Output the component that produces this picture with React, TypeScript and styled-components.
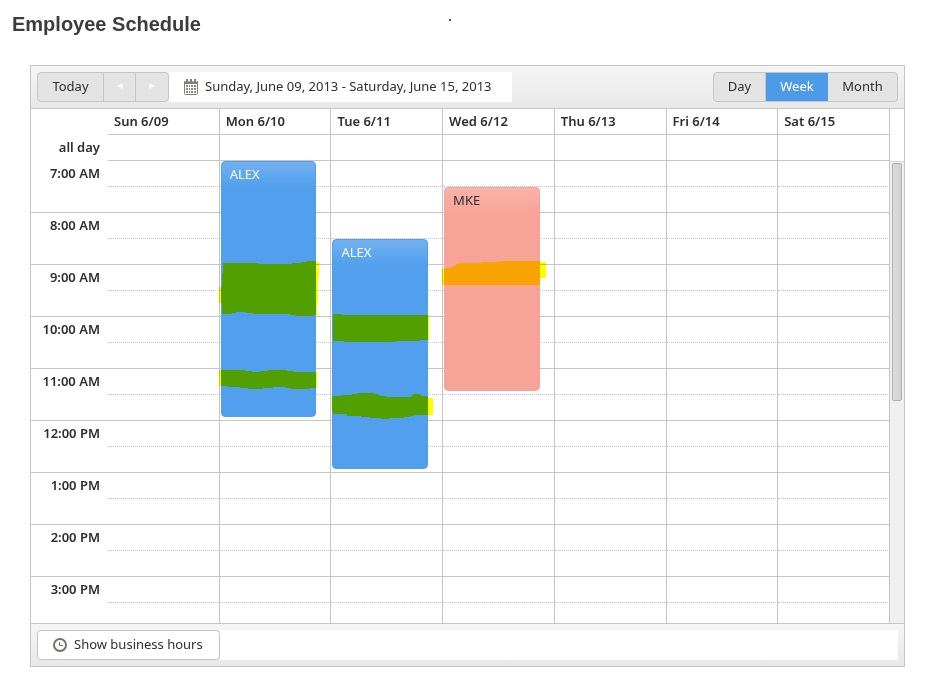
import React from "react";
import styled, { createGlobalStyle } from "styled-components";

const LINE = "#c5c5c5";

const GlobalStyle = createGlobalStyle`
  * { box-sizing: border-box; }
  body {
    margin: 0;
    background: #fff;
    color: #2e2e2e;
    font: 13px/20px "Noto Sans", "Open Sans", sans-serif;
  }
  button { font: inherit; color: inherit; }
`;

const Page = styled.main`
  padding: 12px 20px 16px 12px;
`;

const PageHeader = styled.header`
  display: grid;
  grid-template-columns: 1fr 1fr;
  align-items: start;
  margin-bottom: 29px;
`;

const Title = styled.h1`
  margin: 0;
  font: bold 20px/24px "Liberation Sans", Arial, sans-serif;
  color: #3c3c3c;
`;

const InkDot = styled.span`
  width: 2px;
  height: 2px;
  margin: 7px 0 0 -10px;
  background: #3f48cc;
`;

const Scheduler = styled.section`
  margin-left: 18px;
  border: 1px solid ${LINE};
`;

const Bar = styled.div<{ $footer?: boolean }>`
  display: flex;
  align-items: center;
  padding: 6px;
  background: linear-gradient(#f5f5f5, #e8e8e8);
  border: 0 solid ${LINE};
  border-width: ${(p) => (p.$footer ? "1px 0 0" : "0 0 1px")};
`;

const ButtonGroup = styled.div`
  display: flex;
  height: 30px;
  border: 1px solid ${LINE};
  border-radius: 4px;
  overflow: hidden;
  background: #e3e3e3;
`;

const GroupButton = styled.button<{ $width: number; $active?: boolean }>`
  display: flex;
  align-items: center;
  justify-content: center;
  width: ${(p) => p.$width}px;
  padding: 0 0 2px;
  border: 0;
  background: ${(p) => (p.$active ? "#4d9be8" : "transparent")};
  color: ${(p) => (p.$active ? "#fff" : "#2e2e2e")};
  & + & {
    border-left: ${(p) => (p.$active ? "0" : `1px solid ${LINE}`)};
  }
  &[aria-pressed="true"] + & {
    border-left: 0;
  }
`;

const DateRange = styled.a`
  display: flex;
  align-items: center;
  gap: 6px;
  min-width: 343px;
  height: 30px;
  padding: 0 14px;
  background: #fff;
  color: inherit;
  text-decoration: none;
  white-space: nowrap;
`;

const Label = styled.span`
  padding-bottom: 2px;
`;

const Spacer = styled.div`
  flex: 1;
`;

const FooterStrip = styled.div`
  flex: 1;
  height: 30px;
  background: #fff;
`;

const HoursButton = styled.button`
  display: flex;
  align-items: center;
  gap: 7px;
  min-width: 183px;
  height: 30px;
  padding: 0 15px;
  border: 1px solid ${LINE};
  border-radius: 4px;
  background: #fff;
`;

const GridRow = styled.div`
  display: flex;
`;

const ScrollArea = styled.div`
  flex: 1;
  height: 462px;
  overflow: hidden;
`;

const HeaderArea = styled.div`
  flex: 1;
`;

const HeaderGutter = styled.div`
  width: 14px;
`;

const Track = styled.div`
  width: 14px;
  padding: 1px 2px 0;
  background: #f0f0f0;
  border-top: 1px solid #dadada;
`;

const Thumb = styled.div`
  width: 10px;
  height: 238px;
  border: 1px solid #b0b0b0;
  border-radius: 2px;
  background: linear-gradient(90deg, #dcdcdc, #d2d2d2);
`;

const Table = styled.table`
  width: 100%;
  table-layout: fixed;
  border-collapse: separate;
  border-spacing: 0;
`;

const LabelCol = styled.col`
  width: 77px;
`;

const DayHead = styled.th`
  height: 26px;
  padding: 0 6px 2px;
  border: solid ${LINE};
  border-width: 0 1px 1px 0;
  text-align: left;
  font-weight: 600;
  white-space: nowrap;
`;

const TimeHead = styled.th<{ $line?: boolean }>`
  padding: 2px 8px 0 0;
  border-bottom: ${(p) => (p.$line ? `1px solid ${LINE}` : "0")};
  text-align: right;
  vertical-align: top;
  font-weight: 600;
  white-space: nowrap;
`;

const Slot = styled.td<{ $half?: boolean; $anchor?: boolean }>`
  position: ${(p) => (p.$anchor ? "relative" : "static")};
  height: 26px;
  padding: 0;
  border-right: 1px solid ${LINE};
  border-bottom: 1px ${(p) => (p.$half ? "dotted" : "solid")} ${LINE};
`;

type Tone = "blue" | "red";

const tones = {
  blue: { fill: "#519fed", light: "#72b1f0", text: "#fff" },
  red: { fill: "#f8a398", light: "#f9b3aa", text: "#2e2e2e" },
};

const EventBox = styled.div<{ $height: number; $tone: Tone }>`
  position: absolute;
  top: 0;
  left: 1px;
  right: 14px;
  height: ${(p) => p.$height}px;
  padding: 2px 8px;
  border: 1px solid ${(p) => tones[p.$tone].fill};
  border-radius: 4px;
  background: linear-gradient(
    ${(p) => tones[p.$tone].light},
    ${(p) => tones[p.$tone].fill} 26px
  );
  color: ${(p) => tones[p.$tone].text};
`;

const Highlight = styled.svg`
  position: absolute;
  top: -1px;
  left: -1px;
  width: 96px;
  height: 100%;
  overflow: visible;
  pointer-events: none;
  mix-blend-mode: multiply;
`;

interface Shift {
  name: string;
  day: number;
  slot: number;
  height: number;
  tone: Tone;
  marks: string[];
}

const shifts: Shift[] = [
  {
    name: "ALEX",
    day: 1,
    slot: 0,
    height: 256,
    tone: "blue",
    marks: [
      "2,102 37,102 37,103 71,103 71,102 80,102 80,101 86,101 86,100 95,100 95,101 98,101 98,117 97,117 97,141 96,141 96,154 93,154 93,155 74,155 74,154 69,154 69,153 32,153 32,152 25,152 25,151 15,151 15,152 11,152 11,153 1,153 1,142 -2,142 -2,126 1,126 1,113 2,113",
      "-2,209 24,209 24,210 31,210 31,211 39,211 39,210 47,210 47,209 66,209 66,210 73,210 73,211 96,211 96,227 89,227 89,228 70,228 70,227 65,227 65,226 52,226 52,227 42,227 42,228 27,228 27,227 19,227 19,226 7,226 7,225 -2,225",
    ],
  },
  {
    name: "ALEX",
    day: 2,
    slot: 3,
    height: 230,
    tone: "blue",
    marks: [
      "1,75 10,75 10,76 97,76 97,101 88,101 88,102 64,102 64,103 12,103 12,102 1,102",
      "0,157 9,157 9,156 20,156 20,155 25,155 25,154 42,154 42,155 46,155 46,156 48,156 48,157 54,157 54,158 79,158 79,157 81,156 81,155 88,155 88,156 90,157 96,157 96,159 101,159 101,176 82,176 82,177 78,177 78,178 72,178 72,179 57,179 57,180 49,180 49,179 38,179 38,178 29,178 29,177 15,177 15,175 1,175 1,173 0,173",
    ],
  },
  {
    name: "MKE",
    day: 3,
    slot: 1,
    height: 204,
    tone: "red",
    marks: [
      "-2,82 2,82 2,81 7,81 7,80 9,80 9,79 11,79 11,78 12,77 15,77 15,76 37,76 37,75 57,75 57,74 96,74 96,75 102,75 102,91 96,91 96,98 -2,98",
    ],
  },
];

const days = ["Sun 6/09", "Mon 6/10", "Tue 6/11", "Wed 6/12", "Thu 6/13", "Fri 6/14", "Sat 6/15"];

const hours = [
  "7:00 AM",
  "8:00 AM",
  "9:00 AM",
  "10:00 AM",
  "11:00 AM",
  "12:00 PM",
  "1:00 PM",
  "2:00 PM",
  "3:00 PM",
];

const CalendarIcon = () => (
  <svg width="16" height="16" viewBox="0 0 16 16" aria-hidden="true">
    <path
      d="M1.500 3v11.500a1 1 0 0 0 1 1h11a1 1 0 0 0 1-1V3"
      fill="#fff"
      stroke="#877d78"
    />
    <path d="M1 2h14v3H1z" fill="#877d78" />
    <path d="M3 0h2v3H3zM7 0h2v3H7zM11 0h2v3h-2z" fill="#877d78" />
    <path d="M2.500 1v2M6 1v2M10 1v2M13.500 1v2" stroke="#fff" strokeOpacity="0.7" />
    <path
      d="M3 6h2v2H3zM6 6h1v2H6zM8 6h2v2H8zM11 6h2v2h-2zM3 9h2v2H3zM6 9h1v2H6zM8 9h2v2H8zM11 9h2v2h-2zM3 12h2v2H3zM6 12h1v2H6zM8 12h2v2H8zM11 12h2v2h-2z"
      fill="#8f8681"
    />
  </svg>
);

const ClockIcon = () => (
  <svg width="14" height="14" viewBox="0 0 14 14" fill="none" aria-hidden="true">
    <circle cx="7" cy="7" r="6" stroke="#7a706b" strokeWidth="2" />
    <path d="M6.500 4v3.500h3.500" stroke="#7a706b" />
  </svg>
);

const Arrow = ({ d }: { d: string }) => (
  <svg width="6" height="6" viewBox="0 0 6 6" aria-hidden="true">
    <path d={d} fill="#fafafa" />
  </svg>
);

const ShiftEvent = ({ shift }: { shift: Shift }) => (
  <EventBox $height={shift.height} $tone={shift.tone}>
    {shift.name}
    <Highlight aria-hidden="true">
      {shift.marks.map((points) => (
        <polygon key={points} points={points} fill="#ffff00" shapeRendering="crispEdges" />
      ))}
    </Highlight>
  </EventBox>
);

const Columns = () => (
  <colgroup>
    <LabelCol />
    {days.map((day) => (
      <col key={day} />
    ))}
  </colgroup>
);

const SlotCells = ({ slot }: { slot: number }) => (
  <>
    {days.map((day, index) => {
      const shift = shifts.find((s) => s.day === index && s.slot === slot);
      return (
        <Slot key={day} $half={slot % 2 === 0} $anchor={Boolean(shift)}>
          {shift && <ShiftEvent shift={shift} />}
        </Slot>
      );
    })}
  </>
);

export default function App() {
  return (
    <>
      <GlobalStyle />
      <Page>
        <PageHeader>
          <Title>Employee Schedule</Title>
          <InkDot />
        </PageHeader>
        <Scheduler aria-label="Employee Schedule">
          <Bar>
            <ButtonGroup>
              <GroupButton type="button" $width={65}>Today</GroupButton>
              <GroupButton type="button" $width={32} aria-label="Previous week">
                <Arrow d="M6 0v6L0 3z" />
              </GroupButton>
              <GroupButton type="button" $width={33} aria-label="Next week">
                <Arrow d="M0 0v6l6-3z" />
              </GroupButton>
            </ButtonGroup>
            <DateRange href="#">
              <CalendarIcon />
              <Label>Sunday, June 09, 2013 - Saturday, June 15, 2013</Label>
            </DateRange>
            <Spacer />
            <ButtonGroup>
              <GroupButton type="button" $width={51}>Day</GroupButton>
              <GroupButton type="button" $width={63} $active aria-pressed="true">Week</GroupButton>
              <GroupButton type="button" $width={69}>Month</GroupButton>
            </ButtonGroup>
          </Bar>
          <GridRow>
            <HeaderArea>
              <Table>
                <Columns />
                <thead>
                  <tr>
                    <td />
                    {days.map((day) => (
                      <DayHead key={day} scope="col">{day}</DayHead>
                    ))}
                  </tr>
                </thead>
                <tbody>
                  <tr>
                    <TimeHead scope="row">all day</TimeHead>
                    {days.map((day) => (
                      <Slot key={day} />
                    ))}
                  </tr>
                </tbody>
              </Table>
            </HeaderArea>
            <HeaderGutter />
          </GridRow>
          <GridRow>
            <ScrollArea>
              <Table>
                <Columns />
                <tbody>
                  {hours.map((hour, i) => (
                    <React.Fragment key={hour}>
                      <tr>
                        <TimeHead scope="row" rowSpan={2} $line>{hour}</TimeHead>
                        <SlotCells slot={i * 2} />
                      </tr>
                      <tr>
                        <SlotCells slot={i * 2 + 1} />
                      </tr>
                    </React.Fragment>
                  ))}
                </tbody>
              </Table>
            </ScrollArea>
            <Track>
              <Thumb />
            </Track>
          </GridRow>
          <Bar $footer>
            <HoursButton type="button">
              <ClockIcon />
              <Label>Show business hours</Label>
            </HoursButton>
            <FooterStrip />
          </Bar>
        </Scheduler>
      </Page>
    </>
  );
}
